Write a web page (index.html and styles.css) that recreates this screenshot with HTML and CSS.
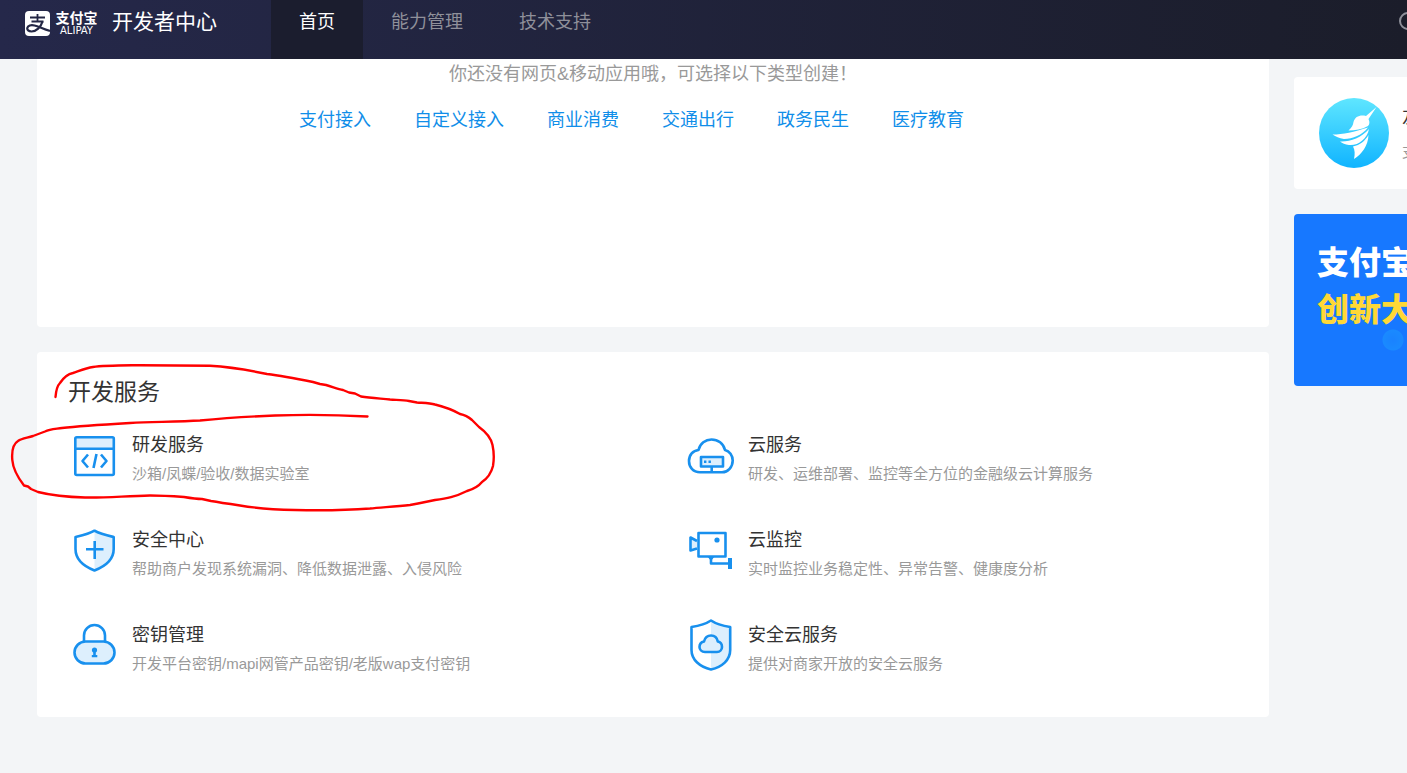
FILE: index.html
```html
<!DOCTYPE html>
<html lang="zh-CN">
<head>
<meta charset="utf-8">
<title>支付宝开发者中心</title>
<link rel="stylesheet" href="styles.css">
</head>
<body>
<header class="topbar">
  <a class="brand" href="#">
    <svg class="brand-mark" viewBox="0 0 25 25" aria-hidden="true">
      <rect width="25" height="25" rx="4" fill="#fff"/>
      <g fill="none" stroke="#242745">
        <path d="M5 6.500h15M12.500 3v7.500M6.500 10.500h12" stroke-width="1.800"/>
        <path d="M17.500 10.500C16 16 11 20.500 6.500 20.500C3.500 20.500 2 18.800 2.300 17C2.800 14.500 6 13.600 9.500 14.500C14 15.600 18 18 25 20" stroke-width="2.200"/>
      </g>
    </svg>
    <span class="brand-name"><span class="brand-cn">支付宝</span><span class="brand-en">ALIPAY</span></span>
    <span class="brand-title">开发者中心</span>
  </a>
  <nav class="nav">
    <a class="nav-item active" href="#">首页</a>
    <a class="nav-item" href="#">能力管理</a>
    <a class="nav-item" href="#">技术支持</a>
  </nav>
  <button class="search" aria-label="搜索">
    <svg viewBox="0 0 20 20" aria-hidden="true"><circle cx="9" cy="9" r="8" fill="none" stroke="#8f909a" stroke-width="2"/><path d="M15 15l5 5" stroke="#8f909a" stroke-width="2"/></svg>
  </button>
</header>

<div class="page">
  <main class="main">
    <section class="panel apps">
      <p class="apps-empty">你还没有网页&amp;移动应用哦，可选择以下类型创建！</p>
      <div class="apps-links">
        <a href="#">支付接入</a><a href="#">自定义接入</a><a href="#">商业消费</a><a href="#">交通出行</a><a href="#">政务民生</a><a href="#">医疗教育</a>
      </div>
    </section>

    <section class="panel services">
      <h2 class="services-title">开发服务</h2>
      <div class="services-grid">
        <a class="service" href="#">
          <svg class="icon" viewBox="69 432 52 52" aria-hidden="true">
            <path class="tint" d="M76 438h37v10H76z"/>
            <rect class="line" x="75.300" y="437.300" width="38.500" height="37.700" rx="1.500"/>
            <path class="line" d="M75 448.700h39M88 454.500l-5.500 6.500 5.500 6.500M101 454.500l5.500 6.500-5.500 6.500M96.500 454l-3 14"/>
          </svg>
          <span class="service-text"><strong>研发服务</strong><span>沙箱/凤蝶/验收/数据实验室</span></span>
        </a>
        <a class="service" href="#">
          <svg class="icon" viewBox="685 432 52 52" aria-hidden="true">
            <path class="line" d="M700 472.300C693 472.300 689 467 689 461C689 455 693 450.500 698.500 450C700 443.500 705.500 439.500 711.500 439.500C718 439.500 723.500 443.500 725 450C729.500 451 732.700 455.500 732.700 460.500C732.700 467 728 472.300 722 472.300Z"/>
            <rect class="line tint-fill" x="701" y="457" width="22" height="9.500"/>
            <path class="line" d="M711.700 467v5"/>
            <path class="solid" d="M704 460.500h2.400v2.400h-2.400zM708.500 460.500h2.400v2.400h-2.400z"/>
          </svg>
          <span class="service-text"><strong>云服务</strong><span>研发、运维部署、监控等全方位的金融级云计算服务</span></span>
        </a>
        <a class="service" href="#">
          <svg class="icon" viewBox="69 527 52 52" aria-hidden="true">
            <path class="tint" d="M94.500 531L113.500 537V551C113.500 560 104 567 94.500 570Z"/>
            <path class="line" d="M94.500 530.700C89 534 82 535.500 75.500 537V549C75.500 559 83 566 94.500 570.500C106 566 113.700 559 113.700 549V537C107 535.500 100 534 94.500 530.700Z"/>
            <path class="line" d="M86 549.300h17.500M94.700 541v18"/>
          </svg>
          <span class="service-text"><strong>安全中心</strong><span>帮助商户发现系统漏洞、降低数据泄露、入侵风险</span></span>
        </a>
        <a class="service" href="#">
          <svg class="icon" viewBox="685 527 52 52" aria-hidden="true">
            <rect class="line" x="698.500" y="533" width="27" height="23.500"/>
            <path class="line tint-fill" d="M697 541l-6.500-3.500v13l6.500-2"/>
            <circle class="solid" cx="717" cy="540" r="2.600"/>
            <path class="line" d="M711 557v6.500h19"/>
            <path class="solid" d="M707 556h8l-4 5zM728 558h4v11h-4z"/>
          </svg>
          <span class="service-text"><strong>云监控</strong><span>实时监控业务稳定性、异常告警、健康度分析</span></span>
        </a>
        <a class="service" href="#">
          <svg class="icon" viewBox="69 622 52 52" aria-hidden="true">
            <path class="line" d="M84 641v-5.500a10.500 10.500 0 0 1 21 0v5.500"/>
            <rect class="line tint-fill" x="74.500" y="641.500" width="40" height="22" rx="11"/>
            <circle class="solid" cx="94.500" cy="650" r="2.600"/>
            <path class="solid" d="M93.200 651h2.600v4h1.500v2.200h-5.500v-2.200h1.400z"/>
          </svg>
          <span class="service-text"><strong>密钥管理</strong><span>开发平台密钥/mapi网管产品密钥/老版wap支付密钥</span></span>
        </a>
        <a class="service" href="#">
          <svg class="icon" viewBox="685 622 52 52" aria-hidden="true">
            <path class="tint" d="M711 621L730 628V650C730 660 720 667 711 669Z"/>
            <path class="line" d="M711 620.500C705 624.500 698 626 691.500 627V650C691.500 660 700 667 711 669.500C722 667 730.200 660 730.200 650V627C724 626 717 624.500 711 620.500Z"/>
            <path class="line tint-fill" d="M705 652C701.500 652 699.500 649.500 699.500 647C699.500 644 701.500 642 704 641.500C705 637.500 707.500 635.500 711 635.500C714.500 635.500 717 637.500 717.800 641.500C720.500 642 722 644.500 722 647C722 649.500 720 652 717 652Z"/>
          </svg>
          <span class="service-text"><strong>安全云服务</strong><span>提供对商家开放的安全云服务</span></span>
        </a>
      </div>
    </section>
  </main>

  <aside class="side">
    <a class="panel profile" href="#">
      <svg class="avatar" viewBox="0 0 70 70" aria-hidden="true">
        <defs><linearGradient id="sky" x1="0" y1="0" x2="0" y2="1"><stop offset="0" stop-color="#5fe6ff"/><stop offset="1" stop-color="#10b4ff"/></linearGradient></defs>
        <circle cx="35" cy="35" r="35" fill="url(#sky)"/>
        <g fill="#fff">
          <path d="M57.500 9L49.500 21C51 24 50.500 26.500 49 28C43 31.500 36 32.500 29.500 32.500C33 29.500 34 27 34.500 24C36 18.500 41 16.500 47 18Z"/>
          <path d="M13.500 36.500C24 36.500 35 34 49 29.500C43 37 34 41 25 41C20 40.500 17 38.500 13.500 36.500Z"/>
          <path d="M21 43.500C31 44 42 40 50 31C48 41 39 48 30 47C26 46.500 23.500 45.500 21 43.500Z"/>
          <path d="M34 48.500C41 47 46 43 49.500 37C49 48 43 56 35 61C36 56 36 52 34 48.500Z"/>
        </g>
      </svg>
      <span class="profile-text"><strong>友</strong><span>支</span></span>
    </a>
    <a class="banner" href="#"><span>支付宝</span><span class="banner-bottom">创新大</span></a>
  </aside>
</div>

<svg class="scribble" viewBox="0 0 500 520" aria-hidden="true">
  <path d="M55.500 397C56 391 57 386 60 383C64 377 68 374 73 373C79 371 86 368 93 367C104 365.500 120 365.500 140 365.200C165 365.500 190 365.500 210 365.800C230 367 248 370 267 374C283 376 298 379 313 382L320 384L326 385C333 387 338 389 343 390L349 392.500L355 393.500L361 396.500C370 398 380 398.500 390 399.500C398 400 404 400 409 401L417 402.500C424 403 430 403 435 404.500C445 407 453 410 460 414C465 415 468 416.500 472 420L479 427C486 432 491 438 492.500 445C494 452 494 460 493 466C491 474 488 478 482 482C478 487 474 489 467 491C455 497 447 498.500 435 500L418 503.500L410 505C395 506.500 380 507.500 370 508.500C350 510 318 510.500 295 510C275 509.500 255 508 240 505.500C230 504 220 502.500 211 501L202 499C196 499 190 498 184 497C170 496 160 495.500 150 495.500C125 496 105 498 85 497.500C65 497 50 495 38 492L31 489L28 486.500L24 485.500C19 479 13 469 12.300 460C11.500 450 13 444 18 441C22 438 27 438 33 436L45 431.500C50 429 56 429 62 428C80 426 105 424.500 130 423C155 422 180 421.500 200 420.500C225 418 250 416.500 275 415.500C305 414.500 340 415 367.500 416.500"/>
</svg>
</body>
</html>
```
FILE: styles.css
```css
* { box-sizing: border-box; }

body {
  margin: 0;
  min-height: 100vh;
  background: #f3f5f7;
  color: #333;
  font-family: "Liberation Sans", "Noto Sans CJK SC", sans-serif;
  overflow-x: hidden;
}

a { color: inherit; text-decoration: none; }
strong { font-weight: 400; }

.topbar {
  display: flex;
  height: 59px;
  background: linear-gradient(90deg, #25284a, #1b1d2a);
  color: #fff;
  overflow: hidden;
}

.brand {
  display: flex;
  align-items: center;
  width: 271px;
  height: 46px;
  padding-left: 25px;
}

.brand-mark { width: 25px; height: 25px; }

.brand-name {
  display: flex;
  flex-direction: column;
  align-items: center;
  width: 43px;
  margin: 0 14px 0 5px;
}

.brand-cn { font-size: 14px; line-height: 16px; font-weight: 700; }
.brand-en { font-family: "DejaVu Sans", sans-serif; font-size: 10px; line-height: 10px; }
.brand-title { font-size: 21px; line-height: 44px; padding-bottom: 2px; }

.nav { display: flex; }

.nav-item {
  padding: 0 28px;
  font-size: 18px;
  line-height: 44px;
  color: #8f909a;
}

.nav-item.active { background: #1b1d2e; color: #fff; }

.search {
  width: 20px;
  height: 20px;
  margin: 12px -12px 0 auto;
  padding: 0;
  border: 0;
  background: none;
  flex: none;
}

.search svg { display: block; width: 20px; height: 20px; }

.page { display: flex; gap: 25px; padding-left: 37px; }
.main { flex: 1; min-width: 0; }
.panel { background: #fff; border-radius: 4px; }

.apps {
  min-height: 268px;
  border-top-left-radius: 0;
  border-top-right-radius: 0;
  text-align: center;
  font-size: 18px;
  line-height: 30px;
}

.apps-empty { margin: 0; color: #999; }

.apps-links {
  display: flex;
  justify-content: center;
  padding-top: 16px;
  color: #108ee9;
}

.apps-links a { margin-right: 43px; }

.services { margin-top: 25px; padding: 24px 0 42px; }

.services-title {
  margin: 0 0 24px;
  padding-left: 31px;
  font-size: 23px;
  line-height: 32px;
  font-weight: 400;
}

.services-grid {
  display: grid;
  grid-template-columns: 1fr 1fr;
  row-gap: 42px;
}

.service { display: flex; gap: 11px; padding-left: 32px; }
.icon { width: 52px; height: 52px; flex: none; overflow: visible; }
.line { fill: none; stroke: #1890ee; stroke-width: 2.6; stroke-linejoin: round; }
.tint { fill: #ddeffd; }
.tint-fill { fill: #ddeffd; }
.solid { fill: #1890ee; }

.service-text { display: flex; flex-direction: column; gap: 5px; }
.service-text strong { font-size: 18px; line-height: 26px; }
.service-text span { font-size: 15px; line-height: 22px; color: #999; }

.side { flex: 0 0 113px; overflow: hidden; padding-top: 18px; white-space: nowrap; }

.profile {
  display: flex;
  align-items: center;
  gap: 13px;
  height: 112px;
  padding-left: 25px;
  border-radius: 4px 0 0 4px;
}

.avatar { width: 70px; height: 70px; flex: none; }
.profile-text { display: flex; flex-direction: column; gap: 11px; }
.profile-text strong { font-size: 18px; line-height: 26px; }
.profile-text span { font-size: 14px; line-height: 22px; color: #999; }

.banner {
  display: flex;
  flex-direction: column;
  height: 172px;
  margin-top: 25px;
  padding: 26px 0 0 23px;
  border-radius: 4px 0 0 4px;
  background: radial-gradient(circle at 99px 126px, #1a82ff 0, #1a8aff 10px, transparent 11px) #1778ff;
  font-size: 32px;
  line-height: 47px;
  font-weight: 900;
  color: #fff;
}

.banner-bottom { color: #ffd836; }

.scribble {
  position: absolute;
  top: 0;
  left: 0;
  width: 500px;
  height: 520px;
  pointer-events: none;
}

.scribble path {
  fill: none;
  stroke: #f00;
  stroke-width: 2.4;
  stroke-linecap: round;
  stroke-linejoin: round;
}
```
